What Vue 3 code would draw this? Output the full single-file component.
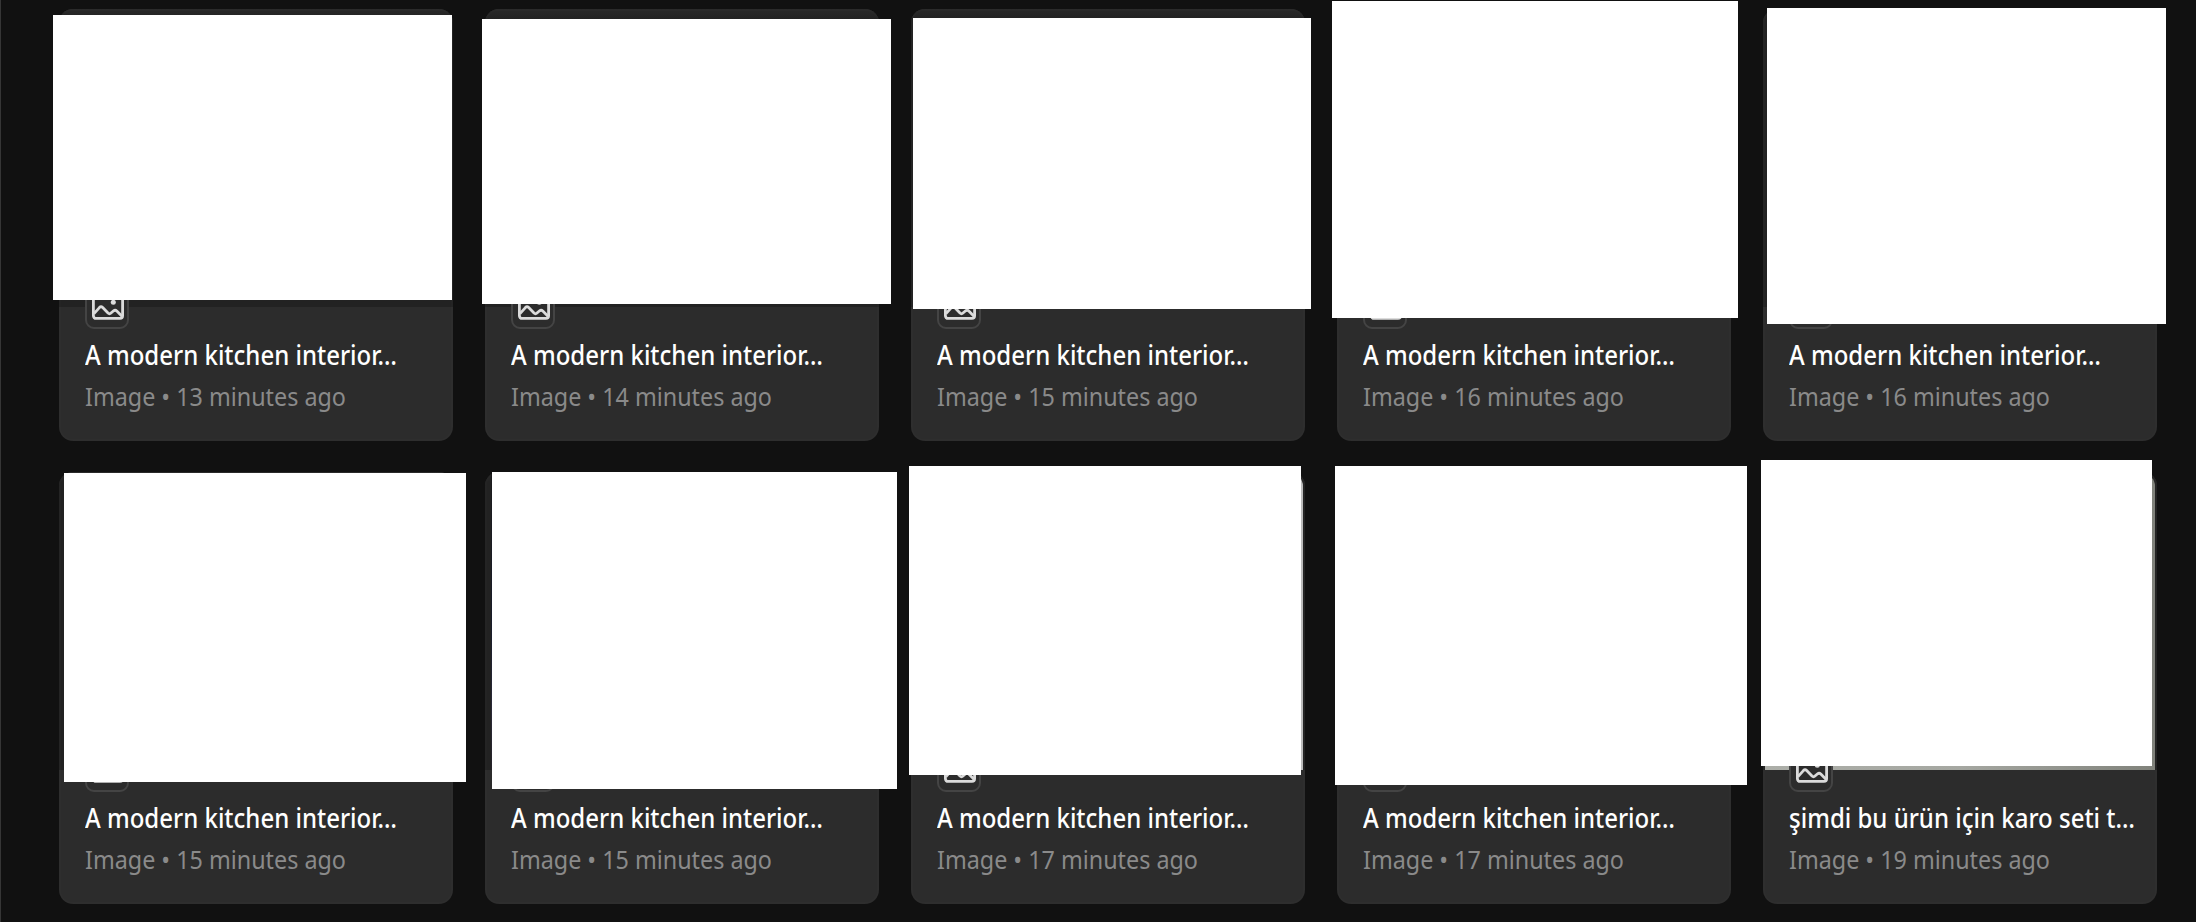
<template>
  <main class="gallery">
    <article v-for="(item, i) in items" :key="i" class="card">
      <div class="preview">
        <div v-if="item.thumb" class="thumb" :class="item.thumb"></div>
      </div>
      <div class="info">
        <div class="badge">
          <svg viewBox="0 0 32 32" fill="none" stroke="#dbdbdb" stroke-width="2.8">
            <rect x="1.4" y="1.4" width="29.2" height="27" rx="2.6" />
            <path d="M2 23.6 L7.4 17.6 Q9 16 10.7 17.6 L16 23 Q17.5 24.4 19 23 L21.6 20.8 Q23.2 19.6 24.8 21 L30 26.2" />
            <circle cx="21.3" cy="12.3" r="2.5" fill="#dbdbdb" stroke="none" />
          </svg>
        </div>
        <h3 class="title"><span>{{ item.title }}</span></h3>
        <p class="meta"><span>Image • {{ item.age }} minutes ago</span></p>
      </div>
      <div class="cover" :style="coverStyle(item.cover)"></div>
    </article>
  </main>
</template>

<script setup>
const kitchen = 'A modern kitchen interior…'

// cover: left, top, width, height relative to the card
const items = [
  { title: kitchen, age: 13, cover: [-6, 6, 399, 285] },
  { title: kitchen, age: 14, cover: [-3, 10, 409, 285] },
  { title: kitchen, age: 15, cover: [2, 9, 398, 291] },
  { title: kitchen, age: 16, cover: [-5, -8, 406, 317] },
  { title: kitchen, age: 16, cover: [4, -1, 399, 316] },
  { title: kitchen, age: 15, cover: [5, 1, 402, 309] },
  { title: kitchen, age: 15, cover: [7, 0, 405, 317], thumb: 'night' },
  { title: kitchen, age: 17, cover: [-2, -6, 392, 309], thumb: 'light' },
  { title: kitchen, age: 17, cover: [-2, -6, 412, 319] },
  { title: 'şimdi bu ürün için karo seti t…', age: 19, cover: [-2, -12, 391, 306], thumb: 'stone' },
]

const coverStyle = ([left, top, width, height]) => ({
  left: left + 'px',
  top: top + 'px',
  width: width + 'px',
  height: height + 'px',
})
</script>

<style>
body { margin: 0; background: #111; overflow: hidden; }
</style>

<style scoped>
.gallery {
  box-sizing: border-box;
  width: 2196px;
  height: 922px;
  padding: 9px 0 0 58px;
  border-left: 1px solid #363636;
  background: #111;
  display: grid;
  grid-template-columns: repeat(5, 394px);
  grid-auto-rows: 432px;
  align-content: start;
  gap: 31px 32px;
  overflow: hidden;
  font-family: "Noto Sans", "Liberation Sans", sans-serif;
}
.card {
  position: relative;
  background: #2c2c2c;
  border-radius: 14px;
}
.card::after {
  content: "";
  position: absolute;
  inset: 0;
  border: 2px solid rgba(255, 255, 255, 0.01);
  border-radius: 14px;
  pointer-events: none;
}
.preview {
  box-sizing: border-box;
  height: 298px;
  padding: 2px 2px 0;
  background: linear-gradient(#292929, #222 10px);
  border-radius: 14px 14px 0 0;
}
.thumb { height: 296px; border-radius: 12px 12px 0 0; }
.night { width: 100px; margin-left: 4px; border-radius: 0; background: linear-gradient(#1c1c1d, #191c2a 50%, #2b2a38 80%, #262329); }
.light { background: #bcbcbc; }
.stone { background: linear-gradient(90deg, #acaea8, #a5a7a1 50%, #80827b); }
.info { padding: 0 26px; }
.badge {
  position: relative;
  box-sizing: border-box;
  width: 44px;
  height: 44px;
  margin-top: -22px;
  border: 2px solid #444;
  border-radius: 9px;
  background: #2c2c2c;
  display: flex;
  align-items: center;
  justify-content: center;
}
.badge svg { display: block; width: 32px; height: 32px; margin: 0 0 2px 2px; flex: none; }
.title, .meta { margin: 0; white-space: nowrap; }
.title span, .meta span { display: inline-block; transform-origin: 0 50%; }
.title { margin-top: 8px; font-size: 27px; line-height: 36px; font-weight: 500; color: #fff; }
.title span { transform: scaleX(0.889); }
.meta { margin-top: 5px; font-size: 26px; line-height: 36px; color: #8a8a8a; }
.meta span { transform: scaleX(0.897); }
.cover { position: absolute; z-index: 1; background: #fff; }
</style>
